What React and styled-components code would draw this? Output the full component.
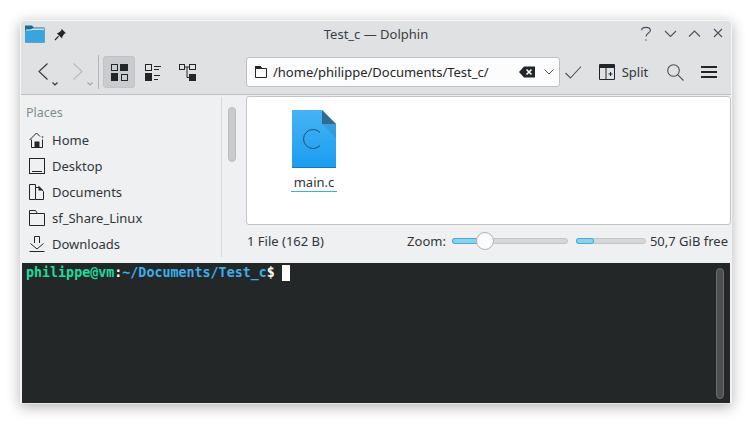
import styled, { createGlobalStyle } from "styled-components";

const Global = createGlobalStyle`
  html, body { margin: 0; padding: 0; background: #fff; }
  body { font-family: "Noto Sans", sans-serif; font-size: 13px; color: #31363b; }
`;

const Page = styled.div`
  width: 752px;
  height: 425px;
  padding: 20px 0 0 20px;
  box-sizing: border-box;
  overflow: hidden;
`;

const Window = styled.div`
  width: 712px;
  height: 384px;
  box-sizing: border-box;
  display: flex;
  flex-direction: column;
  background: #eff0f1;
  border: 1px solid #f4f5f5;
  border-bottom-color: #e4e5e6;
  border-radius: 4px 4px 0 0;
  box-shadow: 0 3px 14px rgba(0, 0, 0, 0.3);
`;

const Header = styled.div`
  height: 73px;
  flex: none;
  background: #dfe1e3;
  border-bottom: 1px solid #bcbec0;
  border-radius: 3px 3px 0 0;
  display: flex;
  flex-direction: column;
`;

const TitleBar = styled.div`
  height: 26px;
  flex: none;
  display: flex;
  align-items: center;
  padding: 0 0 0 4px;
`;

const Title = styled.div`
  flex: 1;
  text-align: center;
  font-size: 13px;
  color: #3a3f44;
  margin-left: 44px;
`;

const Toolbar = styled.div`
  display: flex;
  align-items: center;
  height: 38px;
  margin-top: 6px;
  padding-left: 14px;
`;

const Divider = styled.div`
  width: 1px;
  height: 34px;
  background: #b4b6b8;
  margin: 0 4px 0 2px;
`;

const ToolButton = styled.div`
  width: ${(p) => p.$w || 34}px;
  height: 32px;
  flex: none;
  box-sizing: border-box;
  display: flex;
  align-items: center;
  justify-content: center;
  gap: ${(p) => p.$gap ?? 4}px;
  margin-left: ${(p) => p.$ml || 0}px;
  border-radius: 3px;
  background: ${(p) => (p.$active ? "#c9cbce" : "transparent")};
  border: 1px solid ${(p) => (p.$active ? "#c0c2c5" : "transparent")};
`;

const AddressBar = styled.div`
  width: 314px;
  height: 30px;
  flex: none;
  box-sizing: border-box;
  margin-left: 42px;
  display: flex;
  align-items: center;
  background: #fcfcfc;
  border: 1px solid #bcbec0;
  border-radius: 3px;
  padding: 0 4px 0 8px;
`;

const Path = styled.div`
  flex: 1;
  margin-left: 6px;
  font-size: 13px;
  color: #232629;
`;

const SplitLabel = styled.span`
  color: #31363b;
`;

const Main = styled.div`
  height: 168px;
  flex: none;
  display: flex;
`;

const Sidebar = styled.div`
  width: 201px;
  flex: none;
  box-sizing: border-box;
  padding: 7px 0 0 5px;
  border-right: 1px solid #d7d9da;
  margin-top: 2px;
  margin-bottom: 6px;
  overflow: hidden;
`;

const PlacesLabel = styled.div`
  font-size: 12.5px;
  color: #7f8c8d;
  line-height: 18px;
  margin-bottom: 5px;
`;

const PlaceRow = styled.div`
  height: 26px;
  display: flex;
  align-items: center;
  gap: 7px;
  padding-left: 3px;
  color: #31363b;
`;

const SideScroll = styled.div`
  width: 24px;
  flex: none;
  padding: 12px 0 0 6px;
  box-sizing: border-box;
`;

const ScrollThumb = styled.div`
  width: 8px;
  height: 55px;
  box-sizing: border-box;
  border-radius: 4px;
  background: #c9cbcc;
  border: 1px solid #b9bbbc;
`;

const Content = styled.div`
  flex: 1;
  display: flex;
  flex-direction: column;
`;

const FilePanel = styled.div`
  height: 129px;
  flex: none;
  margin-top: 1px;
  box-sizing: border-box;
  background: #fff;
  border: 1px solid #c1c3c5;
  border-radius: 3px;
  padding: 13px 0 0 44px;
`;

const FileItem = styled.div`
  width: 46px;
  display: flex;
  flex-direction: column;
  align-items: center;
`;

const FileName = styled.div`
  width: 46px;
  margin-top: 5px;
  text-align: center;
  line-height: 18px;
  height: 19px;
  box-sizing: border-box;
  color: #31363b;
  border-bottom: 1px solid #3daee9;
`;

const StatusBar = styled.div`
  flex: 1;
  display: flex;
  align-items: center;
  padding: 0 3px 6px 1px;
  font-size: 13px;
`;

const Count = styled.div`
  flex: 1;
`;

const Track = styled.div`
  position: relative;
  width: ${(p) => p.$w}px;
  height: 6px;
  box-sizing: border-box;
  background: #d5d7d8;
  border: 1px solid #c3c5c6;
  border-radius: 3px;
  margin-left: ${(p) => p.$ml}px;
`;

const Fill = styled.div`
  height: 100%;
  background: #93cee9;
  box-shadow: 0 0 0 1px #3daee9;
  border-radius: 3px;
`;

const Knob = styled.div`
  position: absolute;
  left: 23px;
  top: -7px;
  width: 18px;
  height: 18px;
  box-sizing: border-box;
  border-radius: 50%;
  background: #fcfcfc;
  border: 1px solid #b0b2b4;
`;

const Free = styled.div`
  margin-left: 4px;
`;

const Terminal = styled.div`
  flex: 1;
  margin: 0 1px 0 1px;
  background: #232728;
  display: flex;
  justify-content: space-between;
  padding: 2px 6px 4px 4px;
`;

const Prompt = styled.div`
  font-family: "DejaVu Sans Mono", monospace;
  font-weight: bold;
  font-size: 13.33px;
  line-height: 16px;
  display: flex;
  align-items: flex-start;
  white-space: pre;
`;

const PromptPart = styled.span`
  color: ${(p) => p.$color};
`;

const Cursor = styled.span`
  display: inline-block;
  width: 8px;
  height: 16px;
  margin-left: 7px;
  background: #fcfcfc;
`;

const TermScroll = styled.div`
  width: 8px;
  margin-top: 3px;
  box-sizing: border-box;
  border-radius: 4px;
  background: #4d4f51;
  border: 1px solid #6a6c6e;
`;

const Ink = "#232629";

const NavIcon = ({ color, flip }) => (
  <svg width="10" height="18" viewBox="0 0 10 18" fill="none" stroke={color} strokeWidth="1.1">
    <path d={flip ? "M0.5 0.5 L9 8.5 L0.5 16.5" : "M9.5 0.5 L1 8.5 L9.5 16.5"} />
  </svg>
);

const MiniChevron = ({ color }) => (
  <svg width="6" height="4" viewBox="0 0 6 4" fill="none" stroke={color} strokeWidth="1.2" style={{ marginTop: 24 }}>
    <path d="M0.5 0.5 L3 3 L5.5 0.5" />
  </svg>
);

const App = () => (
  <Page>
    <Global />
    <Window>
      <Header>
        <TitleBar>
          <svg width="20" height="18" viewBox="0 0 20 18">
            <path d="M0 0.5h7l2 2h10.5v15H0z" fill="#1c6a9c" />
            <path d="M0 5.5h6l2-1.5h11.5v13.5H0z" fill="#3aa4dc" />
            <path d="M1 4.5h5l1.5 -1h11.5v1.2H8L6 5.6H1z" fill="#f4f8fb" />
          </svg>
          <svg width="13" height="13" viewBox="0 0 13 13" style={{ marginLeft: 9 }}>
            <path d="M7.5 0.8 L12 5.2 L10.6 5.6 L8.4 8.6 L8 10.4 L2.8 5.2 L4.6 4.8 L7.4 2.4z" fill={Ink} />
            <path d="M4.6 8.2 L1 12" stroke={Ink} strokeWidth="1.2" />
          </svg>
          <Title>Test_c — Dolphin</Title>
          <svg width="90" height="16" viewBox="0 0 90 16" fill="none" stroke="#4d5257" strokeWidth="1.1">
            <path d="M0.6 4.2 C1 0.6 9 0.4 9.4 4.4 C9.6 7 5 7 5 10.5" strokeWidth="1.2" />
            <circle cx="5" cy="14" r="0.7" fill="#4d5257" stroke="none" />
            <path d="M24 5 L29.5 10.5 L35 5" />
            <path d="M48 10.5 L53.5 5 L59 10.5" />
            <path d="M73 3 L81 11 M81 3 L73 11" />
          </svg>
        </TitleBar>
        <Toolbar>
          <ToolButton $w={26}>
            <NavIcon color="#31363b" />
            <MiniChevron color="#31363b" />
          </ToolButton>
          <ToolButton $w={26} $ml={9}>
            <NavIcon color="#b8babd" flip />
            <MiniChevron color="#a4a6a9" />
          </ToolButton>
          <Divider />
          <ToolButton $active $w={32}>
            <svg width="17" height="17" viewBox="0 0 17 17" fill={Ink} stroke={Ink}>
              <rect x="0.5" y="0.5" width="6" height="6" fill="none" />
              <rect x="9.5" y="0.5" width="7" height="6" />
              <rect x="0.5" y="9.5" width="6" height="7" />
              <rect x="10.5" y="10.5" width="6" height="6" fill="none" />
            </svg>
          </ToolButton>
          <ToolButton $ml={1}>
            <svg width="17" height="17" viewBox="0 0 17 17" fill="none" stroke={Ink}>
              <rect x="0.5" y="0.5" width="6" height="6" />
              <rect x="0.5" y="9.5" width="6" height="7" fill={Ink} />
              <path d="M9 2.5h7M9 5.5h5M9 11.5h6M9 15.5h4" />
            </svg>
          </ToolButton>
          <ToolButton>
            <svg width="17" height="17" viewBox="0 0 17 17" fill="none" stroke={Ink}>
              <rect x="0.5" y="0.5" width="5" height="5" />
              <rect x="10.5" y="0.5" width="6" height="5" />
              <rect x="10.5" y="10.5" width="6" height="6" fill={Ink} />
              <path d="M5.5 3h5M8 3v10.5h2.5" />
            </svg>
          </ToolButton>
          <AddressBar>
            <svg width="12" height="12" viewBox="0 0 12 12" fill="none" stroke={Ink}>
              <path d="M0.5 0.5h5l1 2h5v9h-11z" />
              <path d="M0.5 0.5h5l1 2h-6z" fill={Ink} />
            </svg>
            <Path>/home/philippe/Documents/Test_c/</Path>
            <svg width="16" height="12" viewBox="0 0 16 12">
              <path d="M0 6 L5 0.5 H16 V11.5 H5z" fill={Ink} />
              <path d="M7.5 3.5 L12.5 8.5 M12.5 3.5 L7.5 8.5" stroke="#fcfcfc" strokeWidth="1.6" />
            </svg>
            <svg width="10" height="6" viewBox="0 0 10 6" fill="none" stroke="#4d5257" style={{ margin: "0 1px 0 9px" }}>
              <path d="M0.5 0.5 L5 5 L9.5 0.5" />
            </svg>
          </AddressBar>
          <ToolButton $w={27}>
            <svg width="17" height="13" viewBox="0 0 17 13" fill="none" stroke="#4d5257" strokeWidth="1.1">
              <path d="M0.5 7 L5.5 12 L16 0.5" />
            </svg>
          </ToolButton>
          <ToolButton $w={73} $gap={7}>
            <svg width="16" height="16" viewBox="0 0 16 16" fill="none" stroke={Ink}>
              <path d="M0.5 0.5h15v15h-15z" />
              <path d="M0 1h16v3H0z" fill={Ink} stroke="none" />
              <path d="M7 4v11M9.5 10h4M11.5 8v4" />
            </svg>
            <SplitLabel>Split</SplitLabel>
          </ToolButton>
          <ToolButton $w={30}>
            <svg width="17" height="17" viewBox="0 0 17 17" fill="none" stroke="#4d5257" strokeWidth="1.1">
              <circle cx="6.5" cy="6.5" r="5.8" />
              <path d="M10.8 10.8 L16.5 16.5" />
            </svg>
          </ToolButton>
          <ToolButton $w={38}>
            <svg width="16" height="12" viewBox="0 0 16 12" stroke={Ink} strokeWidth="2">
              <path d="M0 1h16M0 6h16M0 11h16" />
            </svg>
          </ToolButton>
        </Toolbar>
      </Header>
      <Main>
        <Sidebar>
          <PlacesLabel>Places</PlacesLabel>
          <PlaceRow>
            <svg width="16" height="16" viewBox="0 0 16 16" fill="none" stroke={Ink}>
              <path d="M0.5 8 L7.5 1 L11 4.5" />
              <path d="M2.5 7.5v8h11v-8" />
              <rect x="6" y="10" width="4" height="5.5" fill={Ink} />
              <circle cx="13.5" cy="5" r="0.8" fill={Ink} stroke="none" />
            </svg>
            Home
          </PlaceRow>
          <PlaceRow>
            <svg width="16" height="16" viewBox="0 0 16 16" fill="none" stroke={Ink}>
              <rect x="0.5" y="0.5" width="15" height="15" />
              <path d="M3 13.5h10" />
            </svg>
            Desktop
          </PlaceRow>
          <PlaceRow>
            <svg width="16" height="16" viewBox="0 0 16 16" fill="none" stroke={Ink}>
              <path d="M0.5 0.5h6v15h-6z" />
              <path d="M6.5 3.5h4l4 4v8h-8" />
              <path d="M9.5 1.5l5 5h-5z" fill={Ink} stroke="none" />
            </svg>
            Documents
          </PlaceRow>
          <PlaceRow>
            <svg width="16" height="16" viewBox="0 0 16 16" fill="none" stroke={Ink}>
              <path d="M0.5 0.5h6l2 3h7v12h-15z" />
              <path d="M0.5 3.5h8" />
            </svg>
            sf_Share_Linux
          </PlaceRow>
          <PlaceRow>
            <svg width="16" height="16" viewBox="0 0 16 16" fill="none" stroke={Ink}>
              <path d="M5.5 7V0.5h5V7" />
              <path d="M1.5 7.5 L8 13 L14.5 7.5" />
              <path d="M0.5 15.5h15" />
            </svg>
            Downloads
          </PlaceRow>
        </Sidebar>
        <SideScroll>
          <ScrollThumb />
        </SideScroll>
        <Content>
          <FilePanel>
            <FileItem>
              <svg width="44" height="58" viewBox="0 0 44 58">
                <defs>
                  <linearGradient id="sheet" x1="0" y1="0" x2="0" y2="1">
                    <stop offset="0" stopColor="#45b3f5" />
                    <stop offset="1" stopColor="#1b9df0" />
                  </linearGradient>
                </defs>
                <path d="M0 0H30L44 14V58H0z" fill="url(#sheet)" />
                <rect y="57" width="44" height="1" fill="#1478b4" />
                <path d="M30 14L44 28V14z" fill="#000" opacity="0.08" />
                <path d="M30 0L44 14H30z" fill="#33698d" />
                <path d="M28 22.5 A9.5 9.5 0 1 0 28 35.5" fill="none" stroke="#1c4f74" strokeWidth="1" />
              </svg>
              <FileName>main.c</FileName>
            </FileItem>
          </FilePanel>
          <StatusBar>
            <Count>1 File (162 B)</Count>
            <span>Zoom:</span>
            <Track $w={116} $ml={6}>
              <Fill style={{ width: 26 }} />
              <Knob />
            </Track>
            <Track $w={70} $ml={8}>
              <Fill style={{ width: 16 }} />
            </Track>
            <Free>50,7 GiB free</Free>
          </StatusBar>
        </Content>
      </Main>
      <Terminal>
        <Prompt>
          <PromptPart $color="#1cdc9a">philippe@vm</PromptPart>
          <PromptPart $color="#fcfcfc">:</PromptPart>
          <PromptPart $color="#3daee9">~/Documents/Test_c</PromptPart>
          <PromptPart $color="#fcfcfc">$</PromptPart>
          <Cursor />
        </Prompt>
        <TermScroll />
      </Terminal>
    </Window>
  </Page>
);

export default App;
